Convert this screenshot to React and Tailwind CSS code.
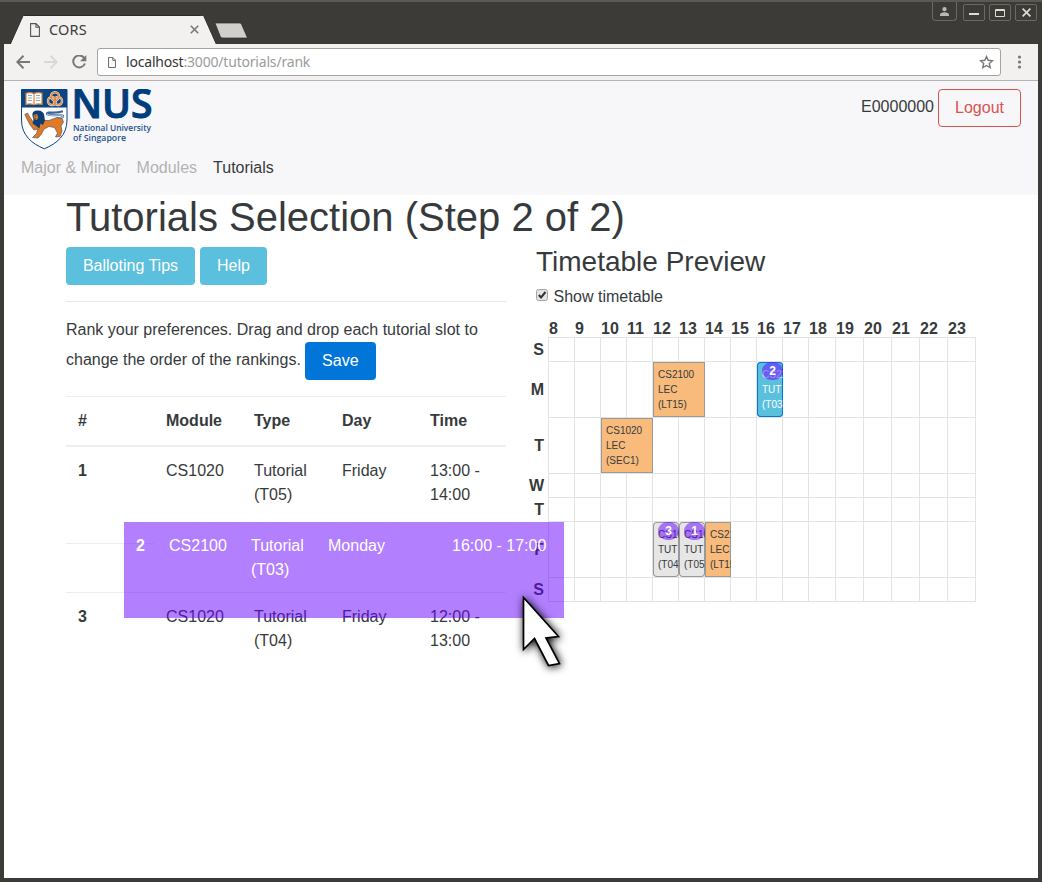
import React from "react";

const HOURS = [8, 9, 10, 11, 12, 13, 14, 15, 16, 17, 18, 19, 20, 21, 22, 23];
const GRID_COLS = "grid grid-cols-[repeat(10,26px)_27px_28px_28px_28px_28px_28px]";

const DAYS = [
  { label: "S", tall: false, events: {} },
  {
    label: "M",
    tall: true,
    events: {
      12: { kind: "lecture", wide: true, lines: ["CS2100", "LEC", "(LT15)"] },
      16: { kind: "active", rank: 2, lines: ["CS2100", "TUT", "(T03)"] },
    },
  },
  {
    label: "T",
    tall: true,
    events: { 10: { kind: "lecture", wide: true, lines: ["CS1020", "LEC", "(SEC1)"] } },
  },
  { label: "W", tall: false, events: {} },
  { label: "T", tall: false, events: {} },
  {
    label: "F",
    tall: true,
    events: {
      12: { kind: "tutorial", rank: 3, lines: ["CS1020", "TUT", "(T04)"] },
      13: { kind: "tutorial", rank: 1, lines: ["CS1020", "TUT", "(T05)"] },
      14: { kind: "lecture", lines: ["CS2100", "LEC", "(LT15)"] },
    },
  },
  { label: "S", tall: false, events: {} },
];

const EVENT_STYLES = {
  lecture: "bg-[#f8bb7c] shadow-[inset_0_0_0_1px_#999] text-[#373a3c]",
  active: "bg-[#5bc0de] shadow-[inset_0_0_0_1px_#0275d8] text-white rounded",
  tutorial: "bg-[#e6e6e6] shadow-[inset_0_0_0_1px_#999] text-[#373a3c] rounded",
};

function PageIcon({ className }) {
  return (
    <svg className={className} viewBox="0 0 10 14" fill="none" stroke="#555" strokeWidth="1.1">
      <path d="M0.6 0.6H6L9.4 4V13.4H0.6ZM6 0.6V4.2H9.4" />
    </svg>
  );
}

function TitleBar() {
  return (
    <div className="flex h-[44px] items-start justify-between border-t-2 border-[#5b5954] bg-[#3c3b37]">
      <div className="relative mt-[13px] h-[29px] w-[260px]">
        <svg className="absolute inset-0 h-[29px] w-[260px]" viewBox="0 0 260 29">
          <path d="M10.500 29L23 1.500Q23.500 0.500 25 0.500H201.500Q203 0.500 203.600 1.500L216 29Z" fill="#f2f1f0" stroke="#2a2926" strokeWidth="1" />
          <path d="M11 29L23.500 1H203.200L215.700 29Z" fill="#f2f1f0" />
          <path d="M215 8H239.500Q241 8 241.500 9.200L247.500 23H223Q221 23 220.300 21.500Z" fill="#d0cfcd" stroke="#2d2c29" strokeWidth="0.700" />
        </svg>
        <div className="relative flex h-[29px] items-center pl-[30px]">
          <PageIcon className="h-[14px] w-[10px]" />
          <span className="-mt-[2px] ml-[9px] w-[141px] font-['Noto_Sans',sans-serif] text-[14.5px] leading-[20px] text-[#3c3c3c] tracking-[0.2px]">CORS</span>
          <svg className="h-[9px] w-[9px]" viewBox="0 0 9 9" stroke="#777" strokeWidth="1.600">
            <path d="M0.800 0.800L8.200 8.200M8.200 0.800L0.800 8.200" />
          </svg>
        </div>
      </div>
      <div className="flex pr-[5px]">
        <div className="mr-[6px] flex h-[19px] w-[25px] items-start justify-center rounded-b border border-t-0 border-[#6b6963] pt-[5px]">
          <svg className="h-[9px] w-[9px]" viewBox="0 0 9 9" fill="#b9b8b3">
            <circle cx="4.500" cy="2.200" r="2.100" />
            <path d="M0 9V7.500Q0.500 5.500 4.500 5.300Q8.500 5.500 9 7.500V9Z" />
          </svg>
        </div>
        <div className="mt-[2px] flex gap-[4px]">
          <div className="flex h-[17px] w-[22px] items-center justify-center rounded-[2px] border border-[#6b6963]">
            <div className="mt-[3px] h-[2px] w-[10px] bg-[#dfdbd2]" />
          </div>
          <div className="flex h-[17px] w-[22px] items-center justify-center rounded-[2px] border border-[#6b6963]">
            <div className="h-[8px] w-[10px] rounded-[1px] border border-t-2 border-[#dfdbd2]" />
          </div>
          <div className="flex h-[17px] w-[22px] items-center justify-center rounded-[2px] border border-[#6b6963]">
            <svg className="h-[9px] w-[9px]" viewBox="0 0 9 9" stroke="#dfdbd2" strokeWidth="1.700">
              <path d="M0.600 0.600L8.400 8.400M8.400 0.600L0.600 8.400" />
            </svg>
          </div>
        </div>
      </div>
    </div>
  );
}

function Toolbar() {
  return (
    <div className="flex h-[37px] items-center border-b border-[#b5b4b3] bg-[#f2f1f0] pl-[12px]">
      <svg className="h-[14px] w-[14px]" viewBox="0 0 14 14" fill="none" stroke="#777" strokeWidth="2">
        <path d="M14 7H1.500M7.500 0.800L1.300 7L7.500 13.200" />
      </svg>
      <svg className="ml-[14px] h-[14px] w-[14px]" viewBox="0 0 14 14" fill="none" stroke="#d9d8d7" strokeWidth="2">
        <path d="M0 7H12.500M6.500 0.800L12.700 7L6.500 13.200" />
      </svg>
      <svg className="ml-[14px] h-[14px] w-[15px]" viewBox="0 0 15 14" fill="none">
        <path d="M12.300 3.200A6 6 0 1 0 12.900 8.500" stroke="#777" strokeWidth="2" />
        <path d="M14.300 0V6.200H8Z" fill="#777" />
      </svg>
      <div className="ml-[10px] flex h-[28px] w-[904px] items-center rounded-[3px] border border-[#a5a4a3] bg-white pl-[10px] pr-[6px]">
        <PageIcon className="h-[11px] w-[8px]" />
        <div className="ml-[10px] flex-1 font-['Noto_Sans',sans-serif] text-[14px] leading-[20px] text-[#9b9b9b]">
          <span className="inline-block tracking-[-0.190px]">
            <span className="text-[#333]">localhost</span>:3000/tutorials/rank
          </span>
        </div>
        <svg className="h-[14px] w-[15px]" viewBox="0 0 15 14" fill="none" stroke="#777" strokeWidth="1.400">
          <path d="M7.500 1.600L9.200 5.300L13.500 5.700L10.300 8.500L11.200 12.600L7.500 10.500L3.800 12.600L4.700 8.500L1.500 5.700L5.800 5.300Z" />
        </svg>
      </div>
      <svg className="ml-[16px] h-[14px] w-[5px]" viewBox="0 0 5 14" fill="#777">
        <circle cx="2.500" cy="2" r="1.600" />
        <circle cx="2.500" cy="7" r="1.600" />
        <circle cx="2.500" cy="12" r="1.600" />
      </svg>
    </div>
  );
}

function Logo() {
  return (
    <svg className="h-[62px] w-[134px]" viewBox="0 0 134 62">
      <path d="M0.500 0.500H46V31C46 46 36 54.500 23.300 59.800C10.500 54.500 0.500 46 0.500 31Z" fill="#fff" stroke="#0b4383" />
      <path d="M0.500 0.500H46V18.500H0.500Z" fill="#0b4683" />
      <path d="M5 4.200Q9 3 13 4.500Q17 3 21 4.200V15.300Q17 14.300 13 15.700Q9 14.300 5 15.300Z" fill="#fff" stroke="#dc8238" strokeWidth="1.200" />
      <path d="M13 4.500V15.500" stroke="#dc8238" strokeWidth="1.200" />
      <path d="M7 6.500H11M7 9H11M7 11.500H11M15 6.500H19M15 9H19M15 11.500H19" stroke="#6f90b5" strokeWidth="0.800" />
      <g fill="none" stroke="#f5dcc6" strokeWidth="2.400">
        <circle cx="34" cy="7.300" r="4" /><circle cx="31" cy="12" r="4" /><circle cx="37" cy="12" r="4" />
      </g>
      <g fill="none" stroke="#dc8238" strokeWidth="1.200">
        <circle cx="34" cy="7.300" r="4" /><circle cx="31" cy="12" r="4" /><circle cx="37" cy="12" r="4" />
      </g>
      <path d="M37 29C42 29.500 44 26.500 40 26C35 25.500 30 27.500 26 25C26 22 34 25 41 22.500" fill="none" stroke="#3a6698" strokeWidth="2.200" strokeLinecap="round" />
      <path d="M37 29C42 29.500 44 26.500 40 26C35 25.500 30 27.500 26 25" fill="none" stroke="#fff" strokeWidth="0.800" />
      <path d="M3.800 25.500L6.500 24L9 28.500L13 34L20 31.500L28 31.500L36 28.500L41 29.500L42.500 33L40 37L41 42L39 47.500L34.500 48L36.500 44L33.500 38.500L28 37.500L23 40L20.500 45L17 49L11.500 48.500L15.500 44.500L17 40L13 41L8.500 35L5.500 29Z" fill="#e17a24" stroke="#5b5560" strokeWidth="0.700" />
      <path d="M11.500 27Q10.500 21.500 16.500 21.500Q23 21.500 23.300 27L24 31.500L22 36L19.500 34.500L18.500 39.500L14.500 36.500L11.500 34.500L12.500 31Z" fill="#0b3f78" />
      <path d="M12.500 26L16 25L17.300 28L16 31L12.800 30Z" fill="#e17a24" />
      <path d="M13.500 27H15.500M13.500 29.500H15" stroke="#0b4383" strokeWidth="0.800" />
      <text x="50.500" y="29" fontFamily="Open Sans, sans-serif" fontWeight="600" fontSize="39" fill="#003d7c" stroke="#003d7c" strokeWidth="1" textLength="81" lengthAdjust="spacingAndGlyphs">NUS</text>
      <text x="52" y="41.500" fontFamily="Open Sans, sans-serif" fontWeight="600" fontSize="9" fill="#1f528a" textLength="78" lengthAdjust="spacingAndGlyphs">National University</text>
      <text x="52" y="51.800" fontFamily="Open Sans, sans-serif" fontWeight="600" fontSize="9" fill="#1f528a" textLength="53" lengthAdjust="spacingAndGlyphs">of Singapore</text>
    </svg>
  );
}

function SiteHeader() {
  return (
    <header className="flex h-[114px] justify-between bg-[#f7f7f9] pl-[17px] pr-[17px] pt-[8px]">
      <div>
        <Logo />
        <nav className="mt-[5px] flex gap-4 text-[#b2b2b3]">
          <a>Major &amp; Minor</a>
          <a>Modules</a>
          <a className="text-[#373a3c]">Tutorials</a>
        </nav>
      </div>
      <div className="flex h-[38px] gap-[4px]">
        <span className="mt-[6px]">E0000000</span>
        <button className="h-[38px] w-[83px] rounded border border-[#d9534f] text-[#d9534f]">Logout</button>
      </div>
    </header>
  );
}

function RankTable() {
  return (
    <div className="relative mt-[16px]">
      <div className="grid h-[51px] grid-cols-5 border-t border-b-2 border-[#eceeef] pt-[12px] font-bold *:pl-[12px]">
        <span>#</span><span>Module</span><span>Type</span><span>Day</span><span>Time</span>
      </div>
      <div className="grid h-[96px] grid-cols-5 pt-[12px] *:pl-[12px]">
        <b>1</b><span>CS1020</span><span>Tutorial (T05)</span><span>Friday</span><span className="pr-[12px]">13:00 - 14:00</span>
      </div>
      <div className="h-[49px] w-[88px] border-t border-[#eceeef]" />
      <div className="grid h-[73px] grid-cols-5 border-t border-[#eceeef] pt-[12px] *:pl-[12px]">
        <b>3</b><span>CS1020</span><span>Tutorial (T04)</span><span>Friday</span><span className="pr-[12px]">12:00 - 13:00</span>
      </div>
      <div className="absolute left-[58px] top-[126px] z-20 grid h-[96px] w-[440px] grid-cols-[33px_82px_77px_124px_124px] bg-[#6600ff]/50 pt-[12px] text-white *:pl-[12px]">
        <b>2</b><span>CS2100</span><span>Tutorial (T03)</span><span>Monday</span><span className="whitespace-nowrap">16:00 - 17:00</span>
      </div>
      <svg className="absolute left-[444px] top-[190px] z-30 h-[96px] w-[64px] drop-shadow-[1px_1px_4px_rgba(0,0,0,1)]" viewBox="0 0 64 96">
        <path d="M13.500 11.500V63.500L24.500 52.500L38.500 79.500L49.500 77.500L36 52L48.500 50.500Z" fill="#fff" stroke="#000" strokeWidth="1.700" />
      </svg>
    </div>
  );
}

function EventBlock({ event }) {
  return (
    <div className={`absolute left-0 top-0 z-10 h-[55px] overflow-hidden p-[5px] text-[10px] leading-[15px] ${event.wide ? "w-[52px]" : "w-[26px]"} ${EVENT_STYLES[event.kind]}`}>
      {event.lines.map((line) => (
        <div key={line} className="whitespace-nowrap">{line}</div>
      ))}
      {event.rank && (
        <span className="absolute left-[5px] top-0 flex h-[18px] w-[21px] items-center justify-center rounded-full bg-[#6600ff]/50 pb-[1px] text-[12px] font-bold leading-none text-white">
          {event.rank}
        </span>
      )}
    </div>
  );
}

function Timetable() {
  return (
    <div className="mt-[10px]">
      <div className={`${GRID_COLS} ml-[12px] h-[19px] font-bold leading-[22px]`}>
        {HOURS.map((h) => <span key={h} className="pl-[1px]">{h}</span>)}
      </div>
      {DAYS.map((day, i) => (
        <div key={i} className={`flex ${day.tall ? "h-[56px]" : "h-[24px]"}`}>
          <div className="-ml-[12px] mt-px flex w-[24px] shrink-0 items-center justify-end pr-[4px] font-bold">
            <span className="mt-px">{day.label}</span>
          </div>
          <div className={`${GRID_COLS} w-[428px] shrink-0 border-r border-[#e3e3e3] ${i === 6 ? "h-[25px] border-b" : ""}`}>
            {HOURS.map((h) => (
              <div key={h} className="relative border-l border-t border-[#e3e3e3]">
                {day.events[h] && <EventBlock event={day.events[h]} />}
              </div>
            ))}
          </div>
        </div>
      ))}
    </div>
  );
}

export default function App() {
  return (
    <div className="flex h-[882px] w-[1042px] flex-col overflow-hidden bg-[#3c3b37] font-['Liberation_Sans',Arial,sans-serif] text-[16px] leading-[24px] text-[#373a3c]">
      <TitleBar />
      <div className="mx-[4px] h-[834px] bg-white">
        <Toolbar />
        <SiteHeader />
        <main className="px-[62px]">
          <h1 className="h-[52px] text-[40px] leading-[44px]">Tutorials Selection (Step 2 of 2)</h1>
          <div className="flex gap-[30px]">
            <section className="w-[440px]">
              <div className="flex gap-[5px] text-white">
                <button className="h-[38px] w-[129px] rounded bg-[#5bc0de]">Balloting Tips</button>
                <button className="h-[38px] w-[67px] rounded bg-[#5bc0de]">Help</button>
              </div>
              <hr className="mt-[16px] border-[#e5e5e5]" />
              <div className="mt-[16px]">
                <p>Rank your preferences. Drag and drop each tutorial slot to</p>
                <div className="flex gap-[4px]">
                  <span className="mt-[6px]">change the order of the rankings.</span>
                  <button className="h-[38px] w-[71px] rounded bg-[#0275d8] text-white">Save</button>
                </div>
              </div>
              <RankTable />
            </section>
            <section className="w-[440px]">
              <h2 className="h-[37px] text-[28px] leading-[29px]">Timetable Preview</h2>
              <label className="flex h-[24px] items-center gap-[5.5px]">
                <svg className="-mt-[2px] h-[12px] w-[12px]" viewBox="0 0 12 12">
                  <rect x="0.500" y="0.500" width="11" height="11" rx="2" fill="#e4e4e4" stroke="#a5a5a5" />
                  <path d="M2.800 6L5 8.500L9.500 3" fill="none" stroke="#333" strokeWidth="2" />
                </svg>
                <span className="mt-[2px]">Show timetable</span>
              </label>
              <Timetable />
            </section>
          </div>
        </main>
      </div>
    </div>
  );
}
